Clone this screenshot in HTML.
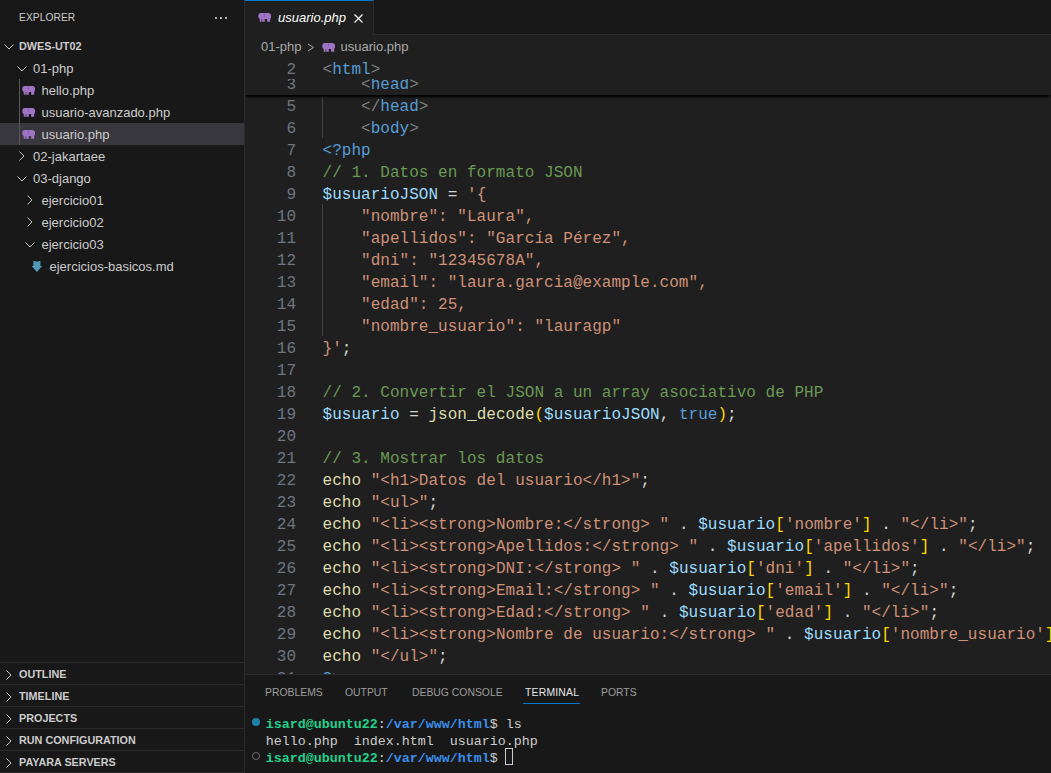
<!DOCTYPE html>
<html><head><meta charset="utf-8"><style>
*{margin:0;padding:0;box-sizing:border-box}
html,body{width:1051px;height:773px;overflow:hidden;background:#1f1f1f}
body{position:relative;font-family:"Liberation Sans",sans-serif;color:#cccccc}
.abs{position:absolute}
#side{position:absolute;left:0;top:0;width:244px;height:773px;background:#181818}
#sideb{position:absolute;left:244px;top:0;width:1px;height:773px;background:#2b2b2b}
.hdr{position:absolute;left:19px;top:12px;font-size:10.2px;line-height:12px;color:#cccccc;letter-spacing:0.1px}
.dot{position:absolute;top:17px;width:2px;height:2px;background:#e0e0e0;border-radius:1px}
.tt{position:absolute;height:22px;line-height:22px;font-size:13px;white-space:pre;color:#cccccc}
.tt.b{font-weight:bold;font-size:10.8px}
.chev{position:absolute;line-height:0}
.chev svg{display:block}
#sel{position:absolute;left:0;top:123px;width:244px;height:22px;background:#37373d}
#guide{position:absolute;left:19px;top:79px;width:1px;height:66px;background:#585858}
.pane{position:absolute;left:0;width:244px;height:22px;border-top:1px solid #2b2b2b}
.ph{position:absolute;left:19px;top:1px;line-height:21px;font-size:10.8px;font-weight:bold;color:#cccccc;white-space:pre}
#tabbar{position:absolute;left:245px;top:0;width:806px;height:35px;background:#181818;border-bottom:1px solid #2b2b2b}
#tab{position:absolute;left:245px;top:0;width:129px;height:35px;background:#1f1f1f;border-right:1px solid #2b2b2b;border-top:1px solid #0078d4}
#tabtxt{position:absolute;left:278px;top:0;line-height:35px;font-size:13px;font-style:italic;color:#ffffff;white-space:pre}
#crumbs{position:absolute;left:245px;top:35px;width:806px;height:22px;background:#1f1f1f}
.cr{position:absolute;top:36px;line-height:22px;font-size:13px;color:#a9a9a9;white-space:pre}
#editor{position:absolute;left:245px;top:57px;width:806px;height:617px;overflow:hidden;background:#1f1f1f}
.ln{position:absolute;left:0;width:51px;text-align:right;height:22px;line-height:22px;font-family:"Liberation Mono",monospace;font-size:16px;color:#6e7681}
.cl{position:absolute;left:77.5px;height:22px;line-height:22px;font-family:"Liberation Mono",monospace;font-size:16px;letter-spacing:0.03px;white-space:pre;color:#d4d4d4}
.tag{color:#808080}.kw{color:#569cd6}.com{color:#6a9955}.var{color:#9cdcfe}.str{color:#ce9178}.op{color:#d4d4d4}.fn{color:#dcdcaa}.br{color:#ffd700}
.ig{position:absolute;width:1px;background:#404040}
#sticky{position:absolute;left:0;top:0;width:806px;height:38px;overflow:hidden;background:#1f1f1f;box-shadow:0 3px 2px -1px #000}
#panel{position:absolute;left:245px;top:674px;width:806px;height:99px;background:#181818;border-top:1px solid #2b2b2b}
.pt{position:absolute;top:0;line-height:35px;font-size:10.4px;color:#9d9d9d;white-space:pre}
.term{position:absolute;left:20.7px;font-family:"Liberation Mono",monospace;font-size:13.33px;line-height:17px;white-space:pre;color:#cccccc}
.g{color:#23d18b;font-weight:bold}.bl{color:#3b8eea;font-weight:bold}
</style></head><body>
<div id="side">
<div class="hdr">EXPLORER</div>
<div class="dot" style="left:215px"></div><div class="dot" style="left:220px"></div><div class="dot" style="left:225px"></div>
<div id="sel"></div>
<div id="guide"></div>
<div class="chev" style="left:4px;top:44px"><svg width="10" height="6" viewBox="0 0 10 6"><path d="M0.5 0.5L5 5L9.5 0.5" stroke="#c5c5c5" stroke-width="1" fill="none"/></svg></div><div class="tt b" style="left:19px;top:35px">DWES-UT02</div>
<div class="chev" style="left:17px;top:66px"><svg width="10" height="6" viewBox="0 0 10 6"><path d="M0.5 0.5L5 5L9.5 0.5" stroke="#c5c5c5" stroke-width="1" fill="none"/></svg></div><div class="tt" style="left:33px;top:58px">01-php</div>
<div class="chev" style="left:22px;top:85px"><svg class="ele" width="13" height="10" viewBox="0 0 13 10"><g transform="translate(0.3 0.6)"><path fill="#a074c4" d="M2.2 0.3H10.2C11.8 0.3 12.9 1.8 12.9 3.6C12.9 4.8 12.4 5.6 11.9 6.1V9.2H8.8V6.4H6.5V9.2H1.4V6.3C0.6 5.8 0 4.8 0 3.3C0 1.6 0.9 0.3 2.2 0.3Z"/><path d="M6.1 0.8V4.3" stroke="#7a56a0" stroke-width="0.7" fill="none"/><path d="M3.6 6.5V9.2" stroke="#1f1f1f" stroke-width="0.6" fill="none"/></g></svg></div><div class="tt" style="left:41.5px;top:80px">hello.php</div>
<div class="chev" style="left:22px;top:107px"><svg class="ele" width="13" height="10" viewBox="0 0 13 10"><g transform="translate(0.3 0.6)"><path fill="#a074c4" d="M2.2 0.3H10.2C11.8 0.3 12.9 1.8 12.9 3.6C12.9 4.8 12.4 5.6 11.9 6.1V9.2H8.8V6.4H6.5V9.2H1.4V6.3C0.6 5.8 0 4.8 0 3.3C0 1.6 0.9 0.3 2.2 0.3Z"/><path d="M6.1 0.8V4.3" stroke="#7a56a0" stroke-width="0.7" fill="none"/><path d="M3.6 6.5V9.2" stroke="#1f1f1f" stroke-width="0.6" fill="none"/></g></svg></div><div class="tt" style="left:41.5px;top:102px">usuario-avanzado.php</div>
<div class="chev" style="left:22px;top:129px"><svg class="ele" width="13" height="10" viewBox="0 0 13 10"><g transform="translate(0.3 0.6)"><path fill="#a074c4" d="M2.2 0.3H10.2C11.8 0.3 12.9 1.8 12.9 3.6C12.9 4.8 12.4 5.6 11.9 6.1V9.2H8.8V6.4H6.5V9.2H1.4V6.3C0.6 5.8 0 4.8 0 3.3C0 1.6 0.9 0.3 2.2 0.3Z"/><path d="M6.1 0.8V4.3" stroke="#7a56a0" stroke-width="0.7" fill="none"/><path d="M3.6 6.5V9.2" stroke="#1f1f1f" stroke-width="0.6" fill="none"/></g></svg></div><div class="tt" style="left:41.5px;top:124px">usuario.php</div>
<div class="chev" style="left:19px;top:151px"><svg width="6" height="10" viewBox="0 0 6 10"><path d="M0.5 0.5L5 5L0.5 9.5" stroke="#c5c5c5" stroke-width="1" fill="none"/></svg></div><div class="tt" style="left:33px;top:146px">02-jakartaee</div>
<div class="chev" style="left:17px;top:176px"><svg width="10" height="6" viewBox="0 0 10 6"><path d="M0.5 0.5L5 5L9.5 0.5" stroke="#c5c5c5" stroke-width="1" fill="none"/></svg></div><div class="tt" style="left:33px;top:168px">03-django</div>
<div class="chev" style="left:27px;top:195px"><svg width="6" height="10" viewBox="0 0 6 10"><path d="M0.5 0.5L5 5L0.5 9.5" stroke="#c5c5c5" stroke-width="1" fill="none"/></svg></div><div class="tt" style="left:41.5px;top:190px">ejercicio01</div>
<div class="chev" style="left:27px;top:217px"><svg width="6" height="10" viewBox="0 0 6 10"><path d="M0.5 0.5L5 5L0.5 9.5" stroke="#c5c5c5" stroke-width="1" fill="none"/></svg></div><div class="tt" style="left:41.5px;top:212px">ejercicio02</div>
<div class="chev" style="left:25px;top:242px"><svg width="10" height="6" viewBox="0 0 10 6"><path d="M0.5 0.5L5 5L9.5 0.5" stroke="#c5c5c5" stroke-width="1" fill="none"/></svg></div><div class="tt" style="left:41.5px;top:234px">ejercicio03</div>
<div class="chev" style="left:31px;top:260px"><svg width="12" height="13" viewBox="0 0 12 13"><path fill="#519aba" d="M2.4 0.8L5.9 1.8L9.4 0.8V6H11.2L5.9 11.9L0.6 6H2.4Z"/></svg></div><div class="tt" style="left:49.5px;top:256px">ejercicios-basicos.md</div>
<div class="pane" style="top:662px"><div class="chev" style="left:6px;top:7px"><svg width="6" height="10" viewBox="0 0 6 10"><path d="M0.5 0.5L5 5L0.5 9.5" stroke="#c5c5c5" stroke-width="1" fill="none"/></svg></div><div class="ph">OUTLINE</div></div>
<div class="pane" style="top:684px"><div class="chev" style="left:6px;top:7px"><svg width="6" height="10" viewBox="0 0 6 10"><path d="M0.5 0.5L5 5L0.5 9.5" stroke="#c5c5c5" stroke-width="1" fill="none"/></svg></div><div class="ph">TIMELINE</div></div>
<div class="pane" style="top:706px"><div class="chev" style="left:6px;top:7px"><svg width="6" height="10" viewBox="0 0 6 10"><path d="M0.5 0.5L5 5L0.5 9.5" stroke="#c5c5c5" stroke-width="1" fill="none"/></svg></div><div class="ph">PROJECTS</div></div>
<div class="pane" style="top:728px"><div class="chev" style="left:6px;top:7px"><svg width="6" height="10" viewBox="0 0 6 10"><path d="M0.5 0.5L5 5L0.5 9.5" stroke="#c5c5c5" stroke-width="1" fill="none"/></svg></div><div class="ph">RUN CONFIGURATION</div></div>
<div class="pane" style="top:750px"><div class="chev" style="left:6px;top:7px"><svg width="6" height="10" viewBox="0 0 6 10"><path d="M0.5 0.5L5 5L0.5 9.5" stroke="#c5c5c5" stroke-width="1" fill="none"/></svg></div><div class="ph">PAYARA SERVERS</div></div>
</div>
<div id="sideb"></div>
<div id="tabbar"></div>
<div id="tab"></div>
<div class="chev" style="left:258px;top:12px"><svg class="ele" width="13" height="10" viewBox="0 0 13 10"><g transform="translate(0.3 0.6)"><path fill="#a074c4" d="M2.2 0.3H10.2C11.8 0.3 12.9 1.8 12.9 3.6C12.9 4.8 12.4 5.6 11.9 6.1V9.2H8.8V6.4H6.5V9.2H1.4V6.3C0.6 5.8 0 4.8 0 3.3C0 1.6 0.9 0.3 2.2 0.3Z"/><path d="M6.1 0.8V4.3" stroke="#7a56a0" stroke-width="0.7" fill="none"/><path d="M3.6 6.5V9.2" stroke="#1f1f1f" stroke-width="0.6" fill="none"/></g></svg></div>
<div id="tabtxt">usuario.php</div>
<svg class="abs" style="left:354px;top:14px" width="9" height="9" viewBox="0 0 9 9"><path d="M0.5 0.5L8.5 8.5M8.5 0.5L0.5 8.5" stroke="#ffffff" stroke-width="1.2"/></svg>
<div id="crumbs"></div>
<div class="cr" style="left:261px">01-php</div>
<svg class="abs" style="left:307px;top:43px" width="8" height="9" viewBox="0 0 8 9"><path d="M1 1L6.5 4.5L1 8" stroke="#a9a9a9" stroke-width="1" fill="none"/></svg>
<div class="chev" style="left:322px;top:42px"><svg class="ele" width="13" height="10" viewBox="0 0 13 10"><g transform="translate(0.3 0.6)"><path fill="#a074c4" d="M2.2 0.3H10.2C11.8 0.3 12.9 1.8 12.9 3.6C12.9 4.8 12.4 5.6 11.9 6.1V9.2H8.8V6.4H6.5V9.2H1.4V6.3C0.6 5.8 0 4.8 0 3.3C0 1.6 0.9 0.3 2.2 0.3Z"/><path d="M6.1 0.8V4.3" stroke="#7a56a0" stroke-width="0.7" fill="none"/><path d="M3.6 6.5V9.2" stroke="#1f1f1f" stroke-width="0.6" fill="none"/></g></svg></div>
<div class="cr" style="left:340.5px">usuario.php</div>
<div id="editor">
<div class="ig" style="left:77px;top:37px;height:44px"></div>
<div class="ig" style="left:77px;top:147px;height:132px"></div>
<div class="ln" style="top:39px">5</div><div class="cl" style="top:39px"><span class="op">    </span><span class="tag">&lt;/</span><span class="kw">head</span><span class="tag">&gt;</span></div>
<div class="ln" style="top:61px">6</div><div class="cl" style="top:61px"><span class="op">    </span><span class="tag">&lt;</span><span class="kw">body</span><span class="tag">&gt;</span></div>
<div class="ln" style="top:83px">7</div><div class="cl" style="top:83px"><span class="kw">&lt;?php</span></div>
<div class="ln" style="top:105px">8</div><div class="cl" style="top:105px"><span class="com">// 1. Datos en formato JSON</span></div>
<div class="ln" style="top:127px">9</div><div class="cl" style="top:127px"><span class="var">$usuarioJSON</span><span class="op"> = </span><span class="str">'{</span></div>
<div class="ln" style="top:149px">10</div><div class="cl" style="top:149px"><span class="str">    "nombre": "Laura",</span></div>
<div class="ln" style="top:171px">11</div><div class="cl" style="top:171px"><span class="str">    "apellidos": "García Pérez",</span></div>
<div class="ln" style="top:193px">12</div><div class="cl" style="top:193px"><span class="str">    "dni": "12345678A",</span></div>
<div class="ln" style="top:215px">13</div><div class="cl" style="top:215px"><span class="str">    "email": "laura.garcia@example.com",</span></div>
<div class="ln" style="top:237px">14</div><div class="cl" style="top:237px"><span class="str">    "edad": 25,</span></div>
<div class="ln" style="top:259px">15</div><div class="cl" style="top:259px"><span class="str">    "nombre_usuario": "lauragp"</span></div>
<div class="ln" style="top:281px">16</div><div class="cl" style="top:281px"><span class="str">}'</span><span class="op">;</span></div>
<div class="ln" style="top:303px">17</div><div class="cl" style="top:303px"></div>
<div class="ln" style="top:325px">18</div><div class="cl" style="top:325px"><span class="com">// 2. Convertir el JSON a un array asociativo de PHP</span></div>
<div class="ln" style="top:347px">19</div><div class="cl" style="top:347px"><span class="var">$usuario</span><span class="op"> = </span><span class="fn">json_decode</span><span class="br">(</span><span class="var">$usuarioJSON</span><span class="op">, </span><span class="kw">true</span><span class="br">)</span><span class="op">;</span></div>
<div class="ln" style="top:369px">20</div><div class="cl" style="top:369px"></div>
<div class="ln" style="top:391px">21</div><div class="cl" style="top:391px"><span class="com">// 3. Mostrar los datos</span></div>
<div class="ln" style="top:413px">22</div><div class="cl" style="top:413px"><span class="fn">echo</span><span class="op"> </span><span class="str">"&lt;h1&gt;Datos del usuario&lt;/h1&gt;"</span><span class="op">;</span></div>
<div class="ln" style="top:435px">23</div><div class="cl" style="top:435px"><span class="fn">echo</span><span class="op"> </span><span class="str">"&lt;ul&gt;"</span><span class="op">;</span></div>
<div class="ln" style="top:457px">24</div><div class="cl" style="top:457px"><span class="fn">echo</span><span class="op"> </span><span class="str">"&lt;li&gt;&lt;strong&gt;Nombre:&lt;/strong&gt; "</span><span class="op"> . </span><span class="var">$usuario</span><span class="br">[</span><span class="str">'nombre'</span><span class="br">]</span><span class="op"> . </span><span class="str">"&lt;/li&gt;"</span><span class="op">;</span></div>
<div class="ln" style="top:479px">25</div><div class="cl" style="top:479px"><span class="fn">echo</span><span class="op"> </span><span class="str">"&lt;li&gt;&lt;strong&gt;Apellidos:&lt;/strong&gt; "</span><span class="op"> . </span><span class="var">$usuario</span><span class="br">[</span><span class="str">'apellidos'</span><span class="br">]</span><span class="op"> . </span><span class="str">"&lt;/li&gt;"</span><span class="op">;</span></div>
<div class="ln" style="top:501px">26</div><div class="cl" style="top:501px"><span class="fn">echo</span><span class="op"> </span><span class="str">"&lt;li&gt;&lt;strong&gt;DNI:&lt;/strong&gt; "</span><span class="op"> . </span><span class="var">$usuario</span><span class="br">[</span><span class="str">'dni'</span><span class="br">]</span><span class="op"> . </span><span class="str">"&lt;/li&gt;"</span><span class="op">;</span></div>
<div class="ln" style="top:523px">27</div><div class="cl" style="top:523px"><span class="fn">echo</span><span class="op"> </span><span class="str">"&lt;li&gt;&lt;strong&gt;Email:&lt;/strong&gt; "</span><span class="op"> . </span><span class="var">$usuario</span><span class="br">[</span><span class="str">'email'</span><span class="br">]</span><span class="op"> . </span><span class="str">"&lt;/li&gt;"</span><span class="op">;</span></div>
<div class="ln" style="top:545px">28</div><div class="cl" style="top:545px"><span class="fn">echo</span><span class="op"> </span><span class="str">"&lt;li&gt;&lt;strong&gt;Edad:&lt;/strong&gt; "</span><span class="op"> . </span><span class="var">$usuario</span><span class="br">[</span><span class="str">'edad'</span><span class="br">]</span><span class="op"> . </span><span class="str">"&lt;/li&gt;"</span><span class="op">;</span></div>
<div class="ln" style="top:567px">29</div><div class="cl" style="top:567px"><span class="fn">echo</span><span class="op"> </span><span class="str">"&lt;li&gt;&lt;strong&gt;Nombre de usuario:&lt;/strong&gt; "</span><span class="op"> . </span><span class="var">$usuario</span><span class="br">[</span><span class="str">'nombre_usuario'</span><span class="br">]</span><span class="op"> . </span><span class="str">"&lt;/li&gt;"</span><span class="op">;</span></div>
<div class="ln" style="top:589px">30</div><div class="cl" style="top:589px"><span class="fn">echo</span><span class="op"> </span><span class="str">"&lt;/ul&gt;"</span><span class="op">;</span></div>
<div class="ln" style="top:611px">31</div><div class="cl" style="top:611px"><span class="kw">?&gt;</span></div>
<div id="sticky">
<div class="ln" style="top:2px">2</div><div class="cl" style="top:2px"><span class="tag">&lt;</span><span class="kw">html</span><span class="tag">&gt;</span></div><div style="position:absolute;left:0;top:22px;width:806px;height:16px;overflow:hidden"><div class="ln" style="top:-5px">3</div><div class="cl" style="top:-5px"><span class="op">    </span><span class="tag">&lt;</span><span class="kw">head</span><span class="tag">&gt;</span></div></div>
</div>
</div>
<div id="panel">
<div class="pt" style="left:20px">PROBLEMS</div>
<div class="pt" style="left:100px">OUTPUT</div>
<div class="pt" style="left:167px">DEBUG CONSOLE</div>
<div class="pt" style="left:280px;color:#e7e7e7;letter-spacing:0.2px">TERMINAL</div>
<div class="abs" style="left:278px;top:28px;width:57px;height:1px;background:#0078d4"></div>
<div class="pt" style="left:356px">PORTS</div>
<div class="abs" style="left:7px;top:43px;width:8px;height:8px;border-radius:50%;background:#1b81a8"></div>
<div class="term" style="top:41px"><span class="g">isard@ubuntu22</span>:<span class="bl">/var/www/html</span>$ ls</div>
<div class="term" style="top:58px">hello.php  index.html  usuario.php</div>
<div class="abs" style="left:7px;top:77px;width:8px;height:8px;border-radius:50%;border:1px solid #6e6e6e"></div>
<div class="term" style="top:75px"><span class="g">isard@ubuntu22</span>:<span class="bl">/var/www/html</span>$ </div>
<div class="abs" style="left:260px;top:73px;width:8px;height:17px;border:1px solid #cccccc"></div>
</div>
<div class="abs" style="left:0;top:772px;width:244px;height:1px;background:#2b2b2b"></div>
</body></html>
